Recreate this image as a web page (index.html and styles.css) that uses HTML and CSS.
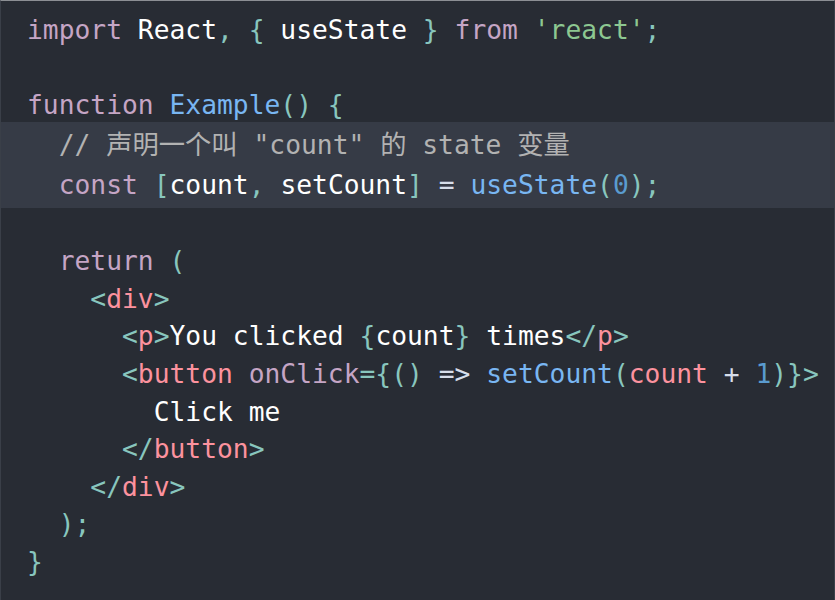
FILE: index.html
```html
<!DOCTYPE html>
<html lang="zh-CN">
<head>
<meta charset="utf-8">
<link rel="stylesheet" href="styles.css">
</head>
<body>
<div class="code">
<div class="line"><span class="kw">import</span> React<span class="pu">,</span> <span class="pu">{</span> useState <span class="pu">}</span> <span class="kw">from</span> <span class="str">'react'</span><span class="pu">;</span></div>
<div class="line"> </div>
<div class="line"><span class="kw">function</span> <span class="fn">Example</span><span class="pu">()</span> <span class="pu">{</span></div>
<div class="hl">
<div class="line">  <span class="cm">// 声明一个叫 "count" 的 state 变量</span></div>
<div class="line">  <span class="kw">const</span> <span class="pu">[</span>count<span class="pu">,</span> setCount<span class="pu">]</span> <span class="op">=</span> <span class="fn">useState</span><span class="pu">(</span><span class="num">0</span><span class="pu">);</span></div>
</div>
<div class="line"> </div>
<div class="line">  <span class="kw">return</span> <span class="pu">(</span></div>
<div class="line">    <span class="pu">&lt;</span><span class="tag">div</span><span class="pu">&gt;</span></div>
<div class="line">      <span class="pu">&lt;</span><span class="tag">p</span><span class="pu">&gt;</span>You clicked <span class="pu">{</span>count<span class="pu">}</span> times<span class="pu">&lt;/</span><span class="tag">p</span><span class="pu">&gt;</span></div>
<div class="line">      <span class="pu">&lt;</span><span class="tag">button</span> <span class="attr">onClick</span><span class="pu">={</span><span class="pu">()</span> <span class="op">=&gt;</span> <span class="fn">setCount</span><span class="pu">(</span><span class="tag">count</span> <span class="op">+</span> <span class="num">1</span><span class="pu">)}</span><span class="pu">&gt;</span></div>
<div class="line">        Click me</div>
<div class="line">      <span class="pu">&lt;/</span><span class="tag">button</span><span class="pu">&gt;</span></div>
<div class="line">    <span class="pu">&lt;/</span><span class="tag">div</span><span class="pu">&gt;</span></div>
<div class="line">  <span class="pu">);</span></div>
<div class="line"><span class="pu">}</span></div>
</div>
</body>
</html>
```
FILE: styles.css
```css
html, body {
  margin: 0;
  padding: 0;
  background: #282c34;
}
body {
  height: 600px;
  box-sizing: border-box;
  border-top: 1px solid #8c8f94;
  border-left: 1px solid #3a3f48;
  border-right: 1px solid #3a3f48;
  overflow: hidden;
}
.code {
  padding-top: 11px;
  font-family: "DejaVu Sans Mono", "Noto Sans CJK SC", monospace;
  font-size: 26.3px;
  line-height: 37.6px;
  color: #ffffff;
}
.line {
  padding-left: 26px;
  white-space: pre;
  height: 37.6px;
}
.hl {
  background: #363b46;
  margin: -3px 0 -2.5px;
  padding: 3px 0 2.5px;
}
.hl .line {
  line-height: 40.4px;
  height: 40.4px;
}
.kw { color: #c5a5c5; }
.pu { color: #88c6be; }
.fn { color: #79b6f2; }
.str { color: #8dc891; }
.tag { color: #fc929e; }
.attr { color: #c5a5c5; }
.num { color: #5a9bcf; }
.cm { color: #b2b2b2; }
.op { color: #d7deea; }
```
